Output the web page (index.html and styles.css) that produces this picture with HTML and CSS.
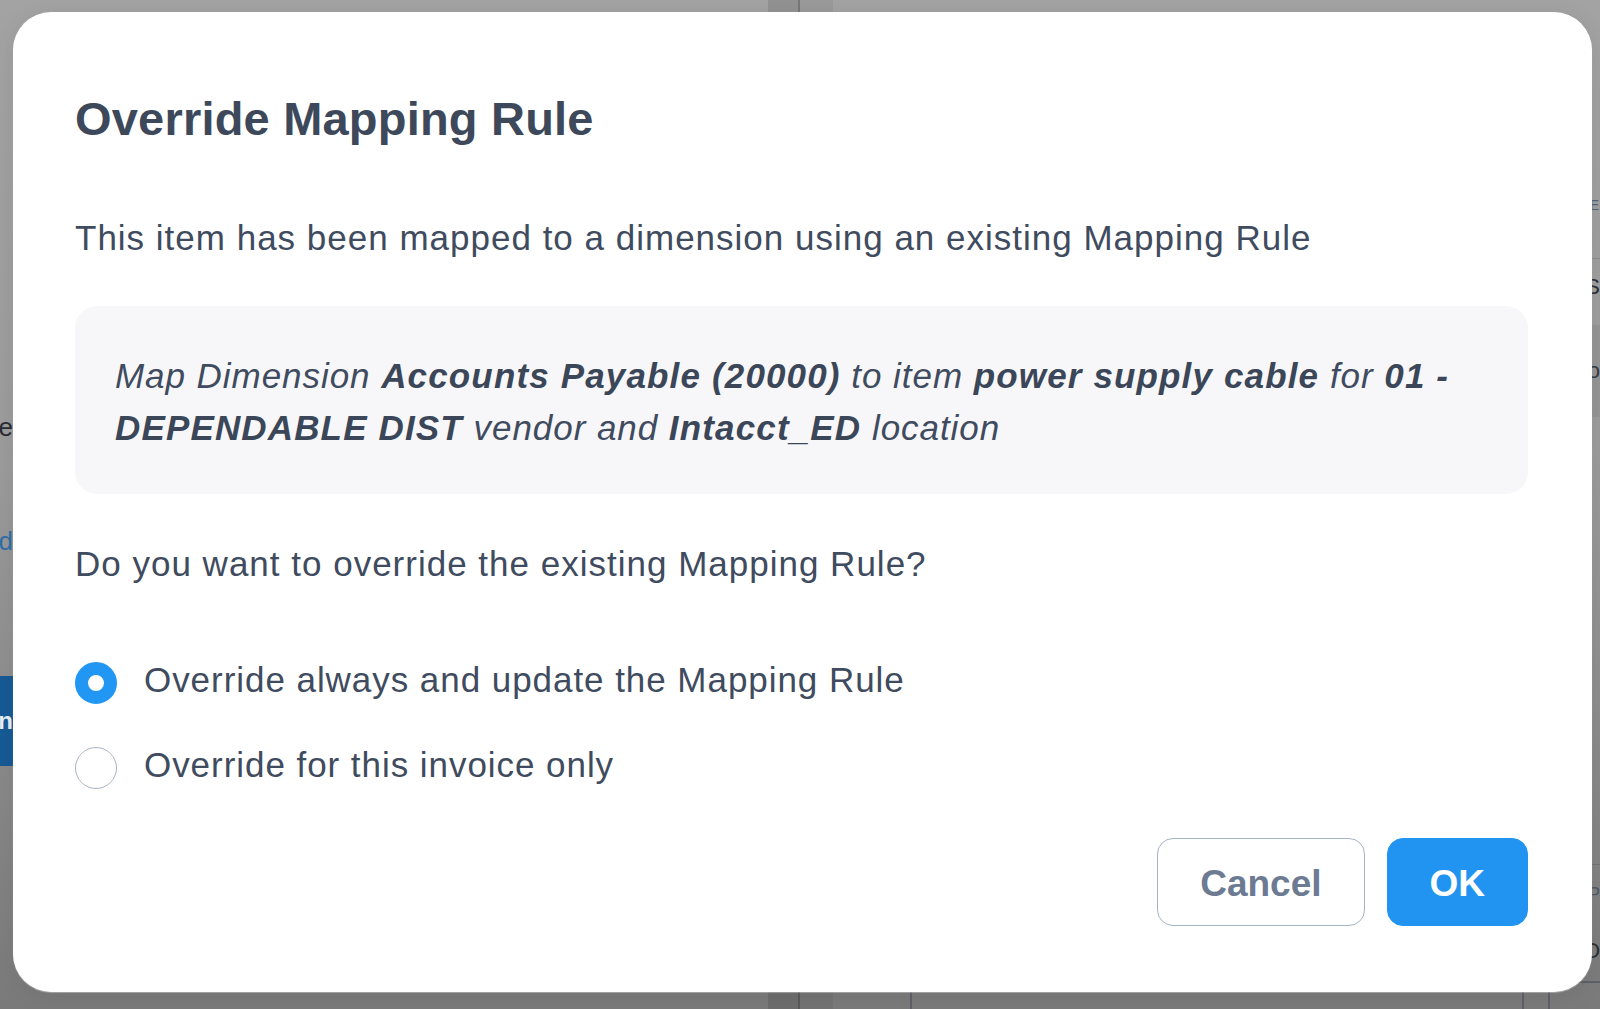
FILE: index.html
```html
<!DOCTYPE html>
<html lang="en">
<head>
<meta charset="utf-8">
<title>Override Mapping Rule</title>
<link rel="stylesheet" href="styles.css">
</head>
<body>
<div class="page" aria-hidden="true">
  <div class="edge">
    <div class="edge-row edge-label">e</div>
    <div class="edge-row edge-link">d</div>
    <div class="edge-row edge-btn"><span>n</span></div>
  </div>
  <div class="col-main"></div>
  <div class="band band-a"></div>
  <div class="band band-b"></div>
  <div class="col-right">
    <div class="right-row right-head">E</div>
    <div class="right-row right-sub">S</div>
    <div class="right-row right-panel">o</div>
    <div class="right-spacer"></div>
    <div class="right-row right-cap">P</div>
    <div class="right-row right-sel">O</div>
    <div class="inputs">
      <div class="input-box input-wide"></div>
      <div class="input-box input-small"></div>
    </div>
  </div>
</div>

<div class="modal" role="dialog" aria-labelledby="modal-title">
  <h1 class="modal-title" id="modal-title">Override Mapping Rule</h1>
  <p class="modal-text">This item has been mapped to a dimension using an existing Mapping Rule</p>
  <div class="rule-box">
    Map Dimension <b>Accounts Payable (20000)</b> to item <b>power supply cable</b> for <b>01 -</b><br><b>DEPENDABLE DIST</b> vendor and <b>Intacct_ED</b> location
  </div>
  <p class="modal-question">Do you want to override the existing Mapping Rule?</p>
  <div class="radio-group">
    <label class="radio-row">
      <span class="radio radio-checked"></span>
      <span class="radio-label">Override always and update the Mapping Rule</span>
    </label>
    <label class="radio-row">
      <span class="radio"></span>
      <span class="radio-label">Override for this invoice only</span>
    </label>
  </div>
  <div class="modal-actions">
    <button class="btn btn-cancel" type="button">Cancel</button>
    <button class="btn btn-ok" type="button">OK</button>
  </div>
</div>
</body>
</html>
```

FILE: styles.css
```css
* {
  box-sizing: border-box;
}

html,
body {
  margin: 0;
  padding: 0;
}

body {
  width: 1600px;
  height: 1009px;
  overflow: hidden;
  position: relative;
  font-family: "Liberation Sans", Arial, Helvetica, sans-serif;
  background: linear-gradient(180deg, #a3a3a3 0%, #9c9c9c 45%, #8a8a8a 75%, #7a7a7a 100%);
}

/* ---------- page behind the dialog ---------- */
.page {
  display: grid;
  grid-template-columns: 13px 755px 32px 33px 1fr;
  height: 1009px;
}

.edge {
  display: flex;
  flex-direction: column;
  align-items: flex-end;
  overflow: hidden;
}

.edge-row {
  white-space: nowrap;
  display: flex;
  justify-content: flex-end;
}

.edge-label {
  margin-top: 409px;
  font-size: 26px;
  line-height: 36px;
  color: #2a2d33;
}

.edge-link {
  margin-top: 78px;
  font-size: 26px;
  line-height: 36px;
  color: #2f6ea8;
}

.edge-btn {
  margin-top: 117px;
  height: 90px;
  width: 13px;
  background: #175a95;
  color: #e8eef5;
  font-size: 24px;
  line-height: 90px;
  font-weight: bold;
}

.band-a {
  background: rgba(0, 0, 0, 0.1);
  border-right: 2px solid rgba(0, 0, 0, 0.18);
}

.band-b {
  background: rgba(0, 0, 0, 0.05);
}

.col-right {
  display: flex;
  flex-direction: column;
  align-items: flex-end;
  overflow: hidden;
}

.right-row {
  white-space: nowrap;
}

.right-head {
  margin-top: 192px;
  font-size: 14px;
  line-height: 26px;
  color: #56637a;
  padding-right: 1px;
}

.right-sub {
  margin-top: 40px;
  font-size: 22px;
  line-height: 40px;
  color: #2c2f35;
  align-self: stretch;
  text-align: right;
  border-top: 1px solid rgba(0, 0, 0, 0.1);
  padding-top: 8px;
}

.right-panel {
  margin-top: 18px;
  align-self: stretch;
  text-align: right;
  height: 92px;
  background: rgba(0, 0, 0, 0.05);
  font-size: 22px;
  line-height: 92px;
  color: #3a3d44;
}

.right-spacer {
  flex: 1;
}

.right-cap {
  font-size: 18px;
  line-height: 34px;
  color: #505a6a;
  align-self: stretch;
  text-align: right;
  border-top: 1px solid rgba(0, 0, 0, 0.12);
  padding-top: 12px;
}

.right-sel {
  margin-top: 20px;
  font-size: 22px;
  line-height: 40px;
  color: #2c2f35;
}

.inputs {
  display: flex;
  gap: 24px;
  align-self: stretch;
  justify-content: flex-end;
  margin-top: 10px;
  margin-right: -40px;
  height: 28px;
}

.input-box {
  height: 40px;
  border: 2px solid rgba(40, 50, 70, 0.35);
  border-radius: 12px;
}

.input-wide {
  width: 614px;
}

.input-small {
  width: 92px;
}

/* ---------- dialog ---------- */
.modal {
  position: absolute;
  left: 13px;
  top: 12px;
  width: 1579px;
  height: 980px;
  background: #ffffff;
  border-radius: 38px;
  padding: 79px 64px 0 62px;
  color: #3f4b5e;
  box-shadow: 0 1px 1px rgba(255, 255, 255, 0.35), 0 4px 24px rgba(0, 0, 0, 0.08);
  display: flex;
  flex-direction: column;
}

.modal-title {
  margin: 0;
  font-size: 47px;
  line-height: 56px;
  font-weight: bold;
  letter-spacing: 0.2px;
  color: #3d495b;
}

.modal-text,
.modal-question {
  margin: 0;
  font-size: 35px;
  line-height: 52px;
  letter-spacing: 1px;
}

.modal-text {
  margin-top: 65px;
}

.rule-box {
  margin-top: 42px;
  padding: 44px 40px 40px 40px;
  background: #f7f7f9;
  border-radius: 22px;
  font-size: 35px;
  line-height: 52px;
  font-style: italic;
  letter-spacing: 0.95px;
  white-space: nowrap;
}

.rule-box b {
  font-weight: bold;
  letter-spacing: 1.15px;
  color: #3b4759;
}

.modal-question {
  margin-top: 43.5px;
}

.radio-group {
  margin-top: 64px;
  display: flex;
  flex-direction: column;
  gap: 33.5px;
}

.radio-row {
  display: flex;
  align-items: center;
  height: 52px;
}

.radio {
  flex: none;
  width: 42px;
  height: 42px;
  margin-top: 6px;
  border-radius: 50%;
  border: 1.5px solid #a9b5c4;
  background: #ffffff;
}

.radio-checked {
  border: 13.5px solid #2196f3;
}

.radio-label {
  margin-left: 27px;
  font-size: 35px;
  line-height: 52px;
  letter-spacing: 0.95px;
}

.modal-actions {
  margin-top: 47.3px;
  display: flex;
  justify-content: flex-end;
  gap: 22px;
}

.btn {
  height: 88px;
  padding: 3px 42px 0 42px;
  border-radius: 16px;
  font-family: "Liberation Sans", Arial, Helvetica, sans-serif;
  font-size: 37px;
  line-height: 81px;
  font-weight: bold;
  cursor: pointer;
}

.btn-cancel {
  background: #ffffff;
  border: 1.5px solid #a6b3c4;
  color: #6c7b92;
}

.btn-ok {
  background: #2094f0;
  border: 1.5px solid #2094f0;
  color: #ffffff;
}
```
